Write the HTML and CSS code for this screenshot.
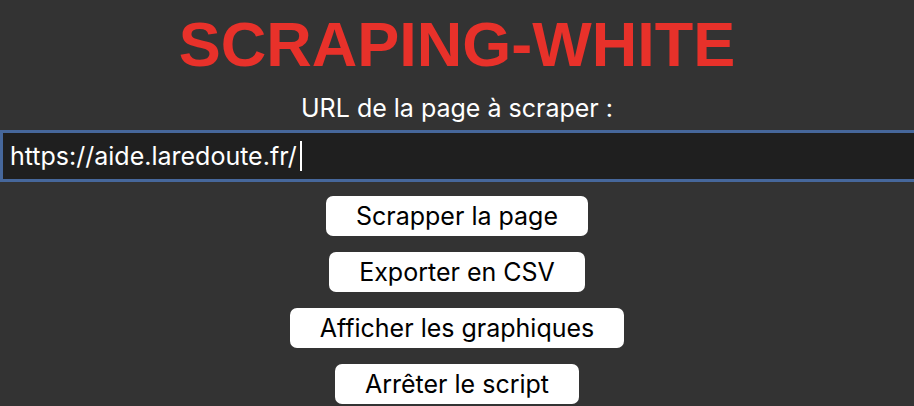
FILE: index.html
```html
<!DOCTYPE html>
<html lang="fr">
<head>
<meta charset="utf-8">
<title>Scraping-White</title>
<link rel="stylesheet" href="styles.css">
</head>
<body>
  <main class="app">
    <h1 class="title">SCRAPING-WHITE</h1>
    <label class="url-label">URL de la page à scraper :</label>
    <div class="url-field"><span class="url-text">https://aide.laredoute.fr/</span><span class="caret"></span></div>
    <div class="actions">
      <button class="btn">Scrapper la page</button>
      <button class="btn">Exporter en CSV</button>
      <button class="btn">Afficher les graphiques</button>
      <button class="btn">Arrêter le script</button>
    </div>
  </main>
</body>
</html>
```

FILE: styles.css
```css
html, body {
  margin: 0;
  padding: 0;
  background: #333333;
  height: 100%;
  overflow: hidden;
}

.app {
  display: flex;
  flex-direction: column;
  align-items: center;
  font-family: "Inter", "Liberation Sans", sans-serif;
  color: #ffffff;
}

.title {
  margin: 12px 0 0;
  font-family: "Liberation Sans", Arial, sans-serif;
  font-weight: bold;
  font-size: 63px;
  line-height: 64px;
  color: #e8312a;
}

.url-label {
  margin-top: 17px;
  font-size: 25px;
  line-height: 30px;
  color: #ffffff;
}

.url-field {
  align-self: stretch;
  margin-top: 7px;
  height: 46px;
  border: 3px solid #46679b;
  border-right: none;
  background: #1f1f1f;
  display: flex;
  align-items: center;
  padding-left: 7px;
  font-size: 25px;
  line-height: 30px;
  color: #ffffff;
}

.caret {
  width: 2px;
  height: 30px;
  background: #ffffff;
  margin-left: 3px;
}

.actions {
  margin-top: 14px;
  display: flex;
  flex-direction: column;
  align-items: center;
  gap: 16px;
}

.btn {
  height: 40px;
  padding: 0 30px;
  border: none;
  border-radius: 7px;
  background: #ffffff;
  color: #000000;
  font-family: "Inter", "Liberation Sans", sans-serif;
  font-size: 25px;
  line-height: 30px;
}
```
